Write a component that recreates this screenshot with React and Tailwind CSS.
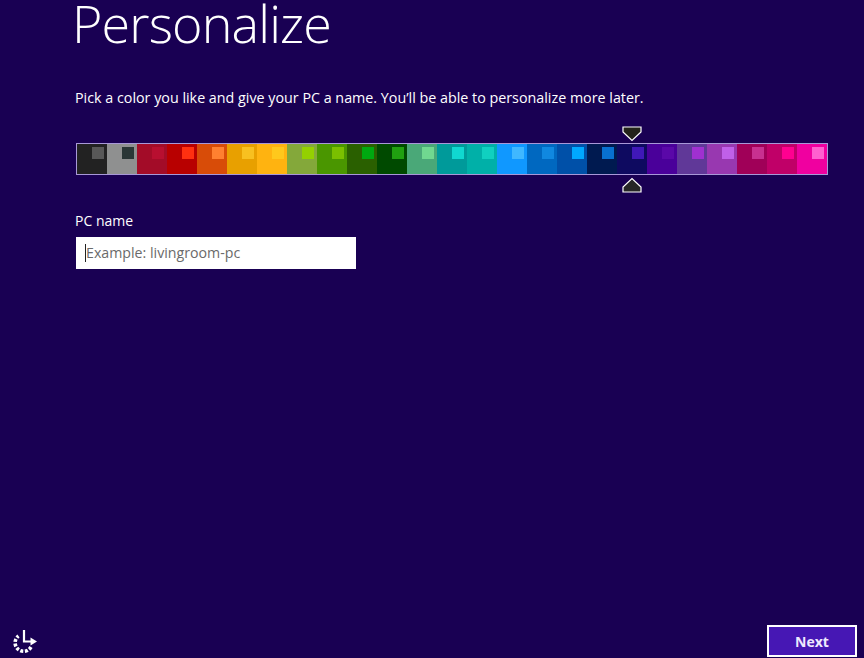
import React from "react";

const SWATCHES = [
  ["#222222", "#585858"], ["#8f9090", "#2a3636"], ["#a30c28", "#b80f30"], ["#b80000", "#ff3010"],
  ["#d84c08", "#ff8030"], ["#e8a000", "#f8c020"], ["#ffb310", "#ffc81c"], ["#84a83a", "#94d000"],
  ["#4a9600", "#7ac000"], ["#2a6000", "#00a810"], ["#004a00", "#20a010"], ["#4aa878", "#70d890"],
  ["#009a9a", "#10d8d0"], ["#00b0a8", "#10d0c0"], ["#1098ff", "#40b8ff"], ["#0068c0", "#1088e0"],
  ["#0050a8", "#00a8ff"], ["#001a50", "#0870d0"], ["#0e0a60", "#4018b8"], ["#4a009a", "#5a08a8"],
  ["#603898", "#a030d0"], ["#9838b0", "#c060e8"], ["#a00058", "#c83090"], ["#c00068", "#ff0090"],
  ["#f000a0", "#ff60d0"],
];

function Marker({ down, className }) {
  return (
    <svg width="20" height="16" viewBox="0 0 20 16" className={className}>
      <path
        d={down ? "M1 1H19V6L10 14.5L1 6Z" : "M1 15H19V10L10 1.5L1 10Z"}
        fill={down ? "#23231a" : "#262626"}
        stroke="#ffffff"
        strokeWidth="1.2"
      />
    </svg>
  );
}

function AccessIcon() {
  return (
    <svg width="28" height="28" viewBox="0 0 28 28" fill="none">
      <path d="M21 20A8.5 8.5 0 1 1 8.5 9" stroke="#fff" strokeWidth="3.6" strokeDasharray="3 1.6" />
      <path d="M14 3V14.5H22" stroke="#fff" strokeWidth="2.2" />
      <path d="M20.5 10.5L27 14.5L20.5 18.5Z" fill="#fff" />
    </svg>
  );
}

export default function App() {
  return (
    <div className="flex h-[658px] w-[864px] flex-col overflow-hidden bg-[#190053] font-['Open_Sans','Liberation_Sans',sans-serif] text-white">
      <h1 className="ml-[72px] text-[52px] font-light leading-[46px] tracking-[-0.85px]">Personalize</h1>
      <p className="ml-[75px] mt-[42px] text-[14.3px] leading-5">
        Pick a color you like and give your PC a name. You’ll be able to personalize more later.
      </p>

      <div className="relative ml-[76px] mt-[35px] flex h-[32px] w-[752px] border border-[#a898d8]">
        {SWATCHES.map(([bg, inner], i) => (
          <div key={i} className="h-full w-[30px] shrink-0 pl-[15px] pt-[3px]" style={{ backgroundColor: bg }}>
            <div className="h-[12px] w-[12px]" style={{ backgroundColor: inner }} />
          </div>
        ))}
        <Marker down className="absolute left-[545px] top-[-18px]" />
        <Marker className="absolute left-[545px] top-[33px]" />
      </div>

      <label className="ml-[75px] mt-[36px] text-[14px] leading-5">PC name</label>
      <div className="ml-[76px] mt-[6px] flex h-[32px] w-[280px] items-center bg-white pl-[9px]">
        <span className="h-[18px] w-px bg-[#222222]" />
        <span className="text-[14.2px] text-[#6a6a6a]">Example: livingroom-pc</span>
      </div>

      <div className="mt-auto flex items-end justify-between">
        <div className="mb-[3px] ml-[10px]">
          <AccessIcon />
        </div>
        <button className="mb-px mr-[7px] h-[32px] w-[90px] border-2 border-white bg-[#4617b4] text-[14px] font-bold text-[#eee8ff]">
          Next
        </button>
      </div>
    </div>
  );
}
